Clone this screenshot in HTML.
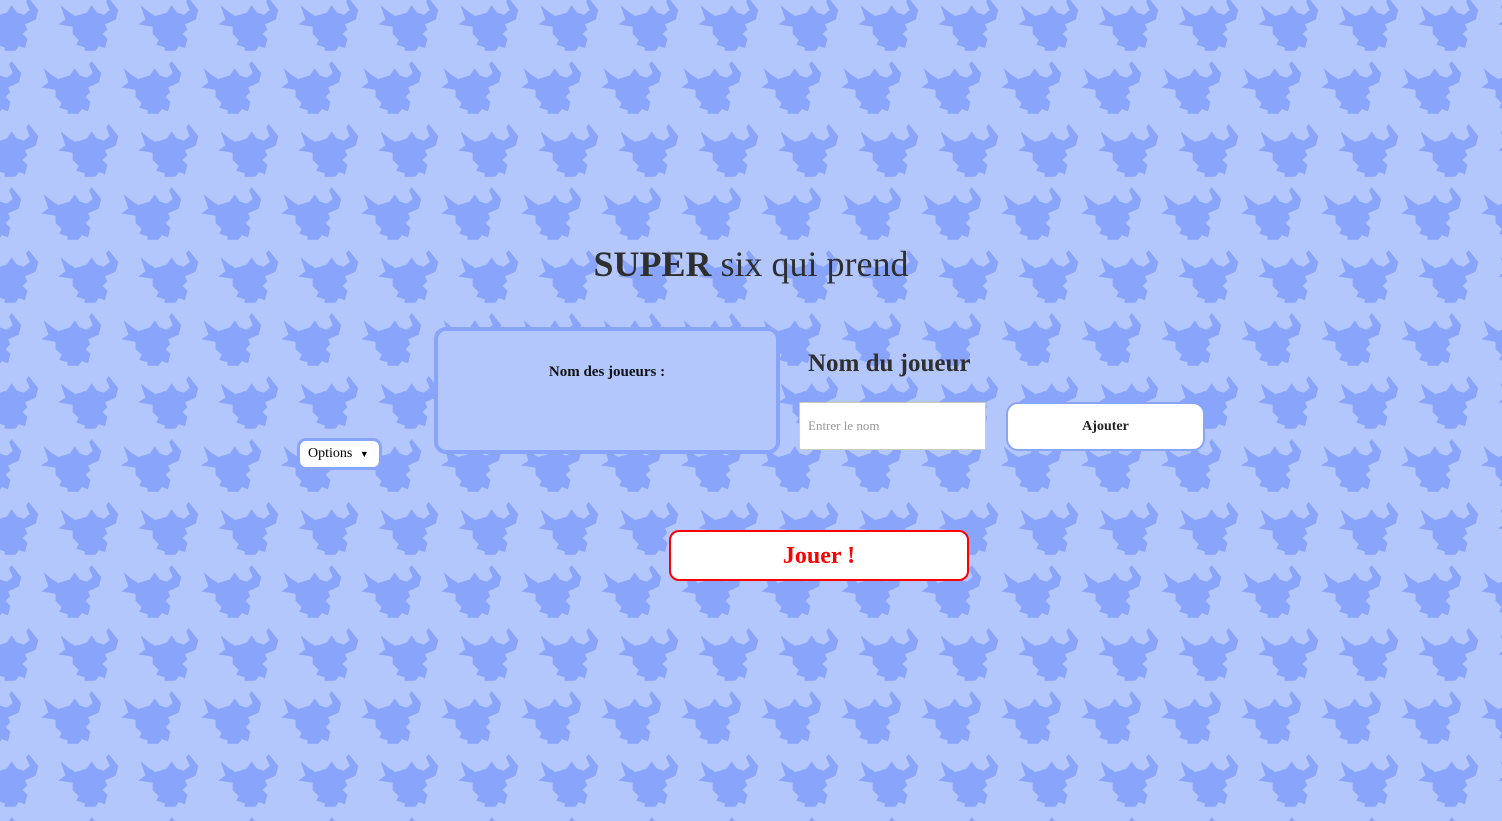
<!DOCTYPE html>
<html><head><meta charset="utf-8"><style>
html,body{margin:0;width:1502px;height:821px;overflow:hidden;font-family:"Liberation Sans",sans-serif;}
#bg{position:absolute;left:0;top:0}
.abs{position:absolute}
h1{position:absolute;left:0;width:1502px;top:243px;margin:0;text-align:center;font-family:"Liberation Serif",serif;font-size:36px;color:#2f2f2f;font-weight:normal}
h1 b{font-weight:bold}
.box{left:434px;top:327px;width:338px;height:119px;border:4px solid #88a4fb;border-radius:12px;background:#b3c7fd}
.box div{text-align:center;margin-top:33px;font-family:"Liberation Serif",serif;font-weight:bold;font-size:15px;color:#111}
.opt{left:297px;top:438px;height:26px;border:3px solid #88a4fb;border-radius:9px;background:#fff;font-family:"Liberation Serif",serif;font-size:14px;line-height:26px;padding-left:8px;width:71px}
.nj{left:808px;top:350px;font-family:"Liberation Serif",serif;font-weight:bold;font-size:25px;color:#2f2f2f}
.inp{left:799px;top:402px;width:187px;height:48px;background:#fff;border:1px solid #ccc;border-radius:2px;box-sizing:border-box;font-family:"Liberation Serif",serif;font-size:13px;color:#999;line-height:46px;padding-left:8px}
.aj{left:1006px;top:402px;width:199px;height:49px;box-sizing:border-box;background:#fff;border:2px solid #88a4fb;border-radius:12px;text-align:center;line-height:45px;font-family:"Liberation Serif",serif;font-weight:bold;font-size:14px;color:#222}
.jo{left:669px;top:530px;width:300px;height:51px;box-sizing:border-box;background:#fff;border:2px solid #f00;border-radius:10px;text-align:center;line-height:49px;font-family:"Liberation Serif",serif;font-weight:bold;font-size:24px;color:#f00}
</style></head><body>
<svg id="bg" width="1502" height="821">
<defs>
<g id="h"><path transform="scale(1.2)" fill="#88a4fb" d="M-22,-14 L-18,-2 L-24,2 L-12,4 L-12,10 L-7,15 L-9,19 L-2,21 L-2,24 L7,24 L10,20 L15,22 L17,14 L13,10 L17,6 L15,2 L24,-2 L26,-10 L18,-20 L16,-17 L19,-10 L14,-6 L8,-8 L4,-14 L0,-8 L-6,-6 L-10,-5 L-16,-9 Z"/></g>
<pattern id="p" width="80" height="126" patternUnits="userSpaceOnUse">
<use href="#h" x="7" y="22"/><use href="#h" x="87" y="22"/>
<use href="#h" x="70" y="85"/><use href="#h" x="-10" y="85"/>
<use href="#h" x="7" y="148"/><use href="#h" x="87" y="148"/>
<use href="#h" x="70" y="-41"/><use href="#h" x="-10" y="-41"/>
</pattern></defs>
<rect width="1502" height="821" fill="#b3c7fd"/>
<rect width="1502" height="821" fill="url(#p)"/>
</svg>
<h1><b>SUPER</b> six qui prend</h1>
<div class="abs box"><div>Nom des joueurs :</div></div>
<div class="abs opt">Options <span style="font-size:9px;margin-left:4px">&#9660;</span></div>
<div class="abs nj">Nom du joueur</div>
<div class="abs inp">Entrer le nom</div>
<div class="abs aj">Ajouter</div>
<div class="abs jo">Jouer !</div>
</body></html>
